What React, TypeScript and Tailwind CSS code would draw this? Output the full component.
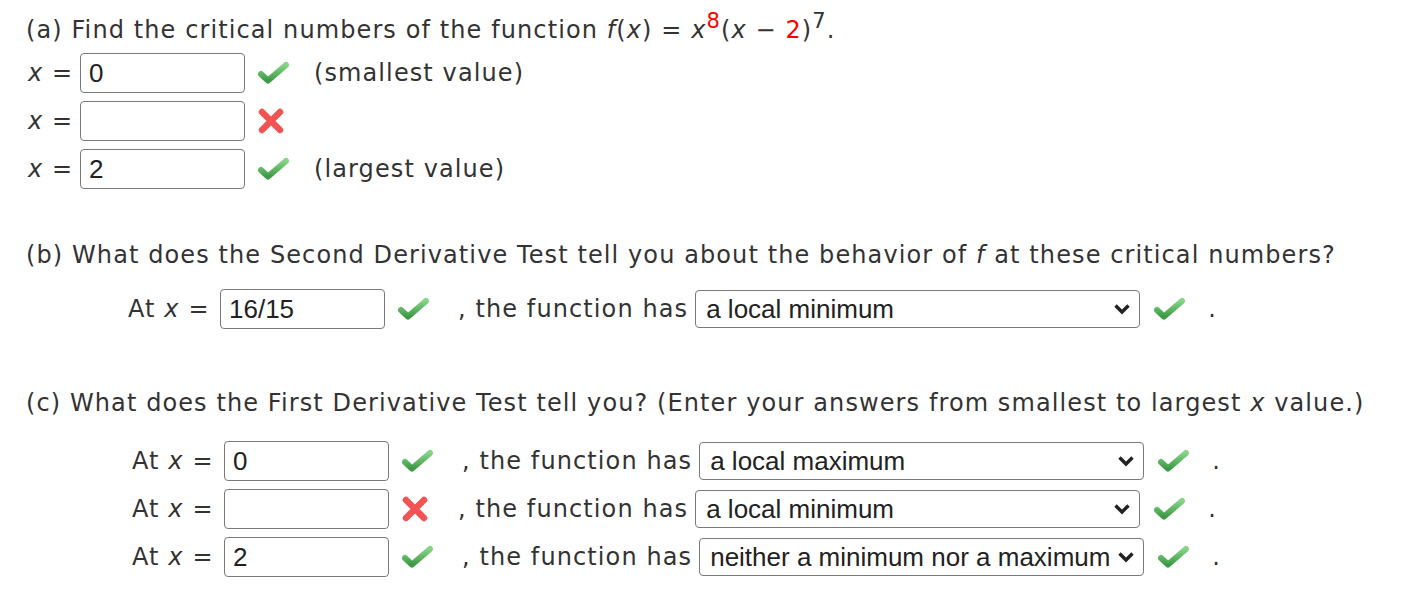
import type { ReactElement, ReactNode } from "react";

// verdana-ish body text; inputs and selects use arial metrics
const BODY = "font-['Verdana','DejaVu_Sans',sans-serif]";
const FIELD = "font-['Liberation_Sans','Arial',sans-serif] tracking-normal";

function Check(): ReactElement {
  return (
    <svg width="34" height="26" viewBox="0 0 34 26" className="block shrink-0">
      <defs>
        <linearGradient id="ck" x1="0" y1="0" x2="0" y2="1">
          <stop offset="0" stopColor="#86d486" />
          <stop offset="1" stopColor="#3e9a46" />
        </linearGradient>
      </defs>
      <path
        d="M5 14 L12 20.5 L30 5"
        fill="none"
        stroke="url(#ck)"
        strokeWidth="6"
        strokeLinecap="round"
        strokeLinejoin="round"
      />
    </svg>
  );
}

function Cross(): ReactElement {
  return (
    <svg width="30" height="28" viewBox="0 0 30 28" className="block shrink-0">
      <path
        d="M6 5 L24 23 M24 5 L6 23"
        fill="none"
        stroke="#f25454"
        strokeWidth="6.5"
        strokeLinecap="round"
      />
    </svg>
  );
}

function Field({ value }: { value: string }): ReactElement {
  return (
    <div
      className={`${FIELD} flex h-[40px] w-[165px] shrink-0 items-center rounded-[4px] border border-[#7a7a7a] px-[8px] text-[26px] text-[#222]`}
    >
      {value}
    </div>
  );
}

function Select({ value }: { value: string }): ReactElement {
  return (
    <div
      className={`${FIELD} flex h-[38px] w-[445px] shrink-0 items-center justify-between rounded-[4px] border border-[#7a7a7a] pl-[10px] pr-[8px] text-[26px] text-[#222]`}
    >
      <span className="whitespace-nowrap">{value}</span>
      <svg width="18" height="12" viewBox="0 0 18 12" className="shrink-0">
        <path d="M2.5 2.5 L9 9 L15.5 2.5" fill="none" stroke="#222" strokeWidth="3.4" />
      </svg>
    </div>
  );
}

const X = (): ReactElement => <i className="italic">x</i>;

function Line({ children, className = "" }: { children: ReactNode; className?: string }): ReactElement {
  return <div className={`flex items-center whitespace-pre ${className}`}>{children}</div>;
}

function HasRow({
  indent,
  value,
  ok,
  choice,
}: {
  indent: string;
  value: string;
  ok: boolean;
  choice: string;
}): ReactElement {
  return (
    <Line className={`h-[40px] ${indent}`}>
      <span className="w-[92px]">
        At <X /> =
      </span>
      <Field value={value} />
      <span className="ml-[11px]">{ok ? <Check /> : <Cross />}</span>
      <span className="ml-[28px]">, the function has</span>
      <span className="ml-[7px]">
        <Select value={choice} />
      </span>
      <span className="ml-[12px]">
        <Check />
      </span>
      <span className="ml-[22px]">.</span>
    </Line>
  );
}

export default function App(): ReactElement {
  return (
    <div
      className={`${BODY} h-[590px] w-[1404px] bg-white pl-[26px] pt-[14px] text-[24px] leading-[32px] tracking-[1.1px] text-[#333]`}
    >
      <div className="whitespace-pre">
        (a) Find the critical numbers of the function <i>f</i>(<X />) = <X />
        <sup className="relative -top-[10px] align-baseline text-[21px] text-[#f00]">8</sup>(<X /> − <span className="text-[#f00]">2</span>)
        <sup className="relative -top-[10px] align-baseline text-[21px]">7</sup>.
      </div>

      <div className="mt-[7px] flex flex-col gap-[8px]">
        {[
          { v: "0", ok: true, note: "(smallest value)" },
          { v: "", ok: false, note: "" },
          { v: "2", ok: true, note: "(largest value)" },
        ].map((r, i) => (
          <Line key={i} className="h-[40px]">
            <span className="ml-[2px] w-[52px]">
              <X /> =
            </span>
            <Field value={r.v} />
            <span className="ml-[11px]">{r.ok ? <Check /> : <Cross />}</span>
            {r.note && <span className="ml-[24px]">{r.note}</span>}
          </Line>
        ))}
      </div>

      <div className="mt-[50px] whitespace-pre">
        (b) What does the Second Derivative Test tell you about the behavior of <i>f</i> at these critical numbers?
      </div>
      <div className="mt-[18px]">
        <HasRow indent="ml-[102px]" value="16/15" ok choice="a local minimum" />
      </div>

      <div className="mt-[58px] whitespace-pre">
        (c) What does the First Derivative Test tell you? (Enter your answers from smallest to largest <X /> value.)
      </div>
      <div className="mt-[22px] flex flex-col gap-[8px]">
        <HasRow indent="ml-[106px]" value="0" ok choice="a local maximum" />
        <HasRow indent="ml-[106px]" value="" ok={false} choice="a local minimum" />
        <HasRow indent="ml-[106px]" value="2" ok choice="neither a minimum nor a maximum" />
      </div>
    </div>
  );
}
